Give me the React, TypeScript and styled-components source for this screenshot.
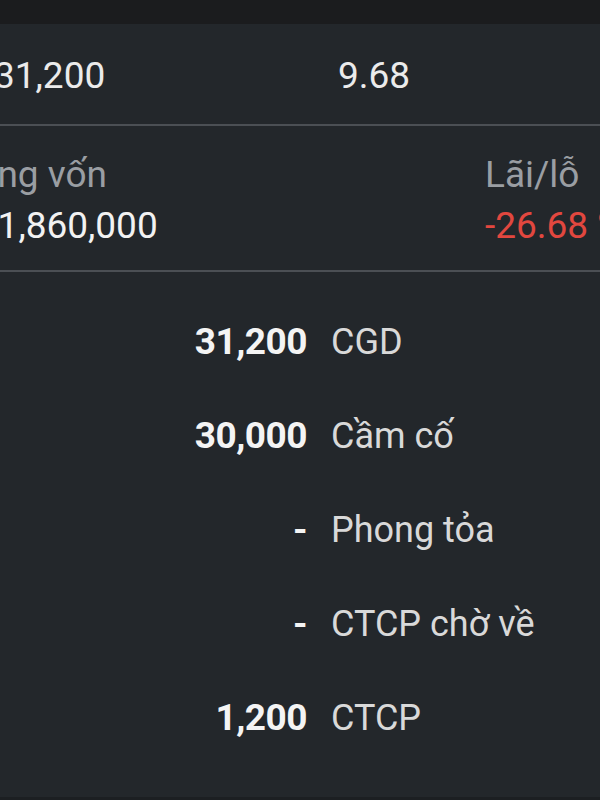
import React from "react"
import styled, { createGlobalStyle } from "styled-components"

const GlobalStyle = createGlobalStyle`
  html, body {
    margin: 0;
    padding: 0;
    background: #23272b;
  }
  body {
    font-family: Roboto, "Liberation Sans", sans-serif;
  }
`

const Screen = styled.div`
  width: 600px;
  height: 800px;
  overflow: hidden;
  background: #23272b;
  display: flex;
  flex-direction: column;
`

const StatusBar = styled.div`
  height: 24px;
  flex-shrink: 0;
  background: #1b1c1e;
`

const Section = styled.section<{ $top: number; $bottom: number }>`
  padding: ${({ $top }) => $top}px 0 ${({ $bottom }) => $bottom}px;
  border-bottom: 2px solid #4b4f54;
  flex-shrink: 0;
`

const PriceRow = styled.div`
  display: grid;
  grid-template-columns: 344px 1fr;
  margin-left: -6px;
  font-size: 37px;
  line-height: 44px;
  color: #ebebeb;
  white-space: nowrap;
`

const SummaryRow = styled.div`
  display: grid;
  grid-template-columns: 529px 1fr;
  margin-left: -44px;
  white-space: nowrap;
`

const Stat = styled.div`
  display: flex;
  flex-direction: column;
  gap: 8px;
`

const StatLabel = styled.div`
  font-size: 37px;
  line-height: 43px;
  color: #9a9ea3;
`

const StatValue = styled.div<{ $negative?: boolean }>`
  font-size: 37px;
  line-height: 43px;
  color: ${({ $negative }) => ($negative ? "#e2473f" : "#f2f2f2")};
`

const Holdings = styled.div`
  display: grid;
  grid-template-columns: 307px 1fr;
  grid-auto-rows: 94px;
  align-content: start;
  column-gap: 24px;
  padding-top: 23px;
  flex: 1;
  white-space: nowrap;
`

const Qty = styled.div`
  text-align: right;
  font-size: 37px;
  font-weight: 700;
  line-height: 94px;
  letter-spacing: -0.5px;
  color: #f4f4f4;
`

const QtyLabel = styled.div`
  font-size: 36px;
  line-height: 94px;
  color: #d9d9d9;
`

const BottomEdge = styled.div`
  height: 3px;
  flex-shrink: 0;
  background: #1c1f22;
`

const holdings = [
  { qty: "31,200", label: "CGD" },
  { qty: "30,000", label: "Cầm cố" },
  { qty: "-", label: "Phong tỏa" },
  { qty: "-", label: "CTCP chờ về" },
  { qty: "1,200", label: "CTCP" },
]

const App = () => {
  return (
    <Screen>
      <GlobalStyle />
      <StatusBar />
      <Section $top={30} $bottom={26}>
        <PriceRow>
          <span>31,200</span>
          <span>9.68</span>
        </PriceRow>
      </Section>
      <Section $top={27} $bottom={23}>
        <SummaryRow>
          <Stat>
            <StatLabel>Tổng vốn</StatLabel>
            <StatValue>411,860,000</StatValue>
          </Stat>
          <Stat>
            <StatLabel>Lãi/lỗ</StatLabel>
            <StatValue $negative>-26.68 %</StatValue>
          </Stat>
        </SummaryRow>
      </Section>
      <Holdings>
        {holdings.map((h) => (
          <React.Fragment key={h.label}>
            <Qty>{h.qty}</Qty>
            <QtyLabel>{h.label}</QtyLabel>
          </React.Fragment>
        ))}
      </Holdings>
      <BottomEdge />
    </Screen>
  )
}

export default App
